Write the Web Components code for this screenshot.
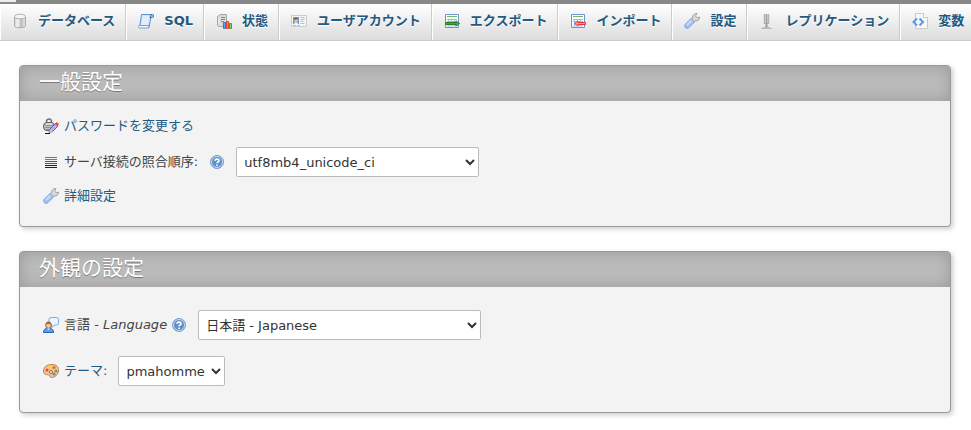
<!DOCTYPE html>
<html lang="ja">

<head>
    <meta charset="utf-8">
    <title>phpMyAdmin</title>
    <style>
        body {
            margin: 0;
            background: #fff;
            color: #444;
            font: 13px/20px "DejaVu Sans", "Noto Sans CJK JP", sans-serif;
        }
    </style>
</head>

<body>
    <pma-page>
        <top-menu slot="menu">
            <menu-tab icon="database">データベース</menu-tab>
            <menu-tab icon="sql">SQL</menu-tab>
            <menu-tab icon="status">状態</menu-tab>
            <menu-tab icon="account">ユーザアカウント</menu-tab>
            <menu-tab icon="export">エクスポート</menu-tab>
            <menu-tab icon="import">インポート</menu-tab>
            <menu-tab icon="wrench">設定</menu-tab>
            <menu-tab icon="replication">レプリケーション</menu-tab>
            <menu-tab icon="variables">変数</menu-tab>
        </top-menu>

        <settings-panel>
            <span slot="title">一般設定</span>
            <action-link icon="password">パスワードを変更する</action-link>
            <select-row icon="lines" help size="wide">
                <span slot="label">サーバ接続の照合順序:</span>
                <option>utf8mb4_unicode_ci</option>
            </select-row>
            <action-link icon="wrench">詳細設定</action-link>
        </settings-panel>

        <settings-panel roomy>
            <span slot="title">外観の設定</span>
            <select-row icon="language" help size="wider">
                <span slot="label">言語 - <i>Language</i></span>
                <option>日本語 - Japanese</option>
            </select-row>
            <select-row icon="theme" size="small">
                <span slot="label">テーマ:</span>
                <option>pmahomme</option>
            </select-row>
        </settings-panel>
    </pma-page>

    <script>
        const icons = {
            database: `
                <path d="M2.500 3.500v9c0 3 11 3 11 0v-9" fill="#ddd" stroke="#aaa"/>
                <path d="M5 6v8M6 6v8" stroke="#f4f4f4"/><path d="M8 6h3v8H8z" fill="#c2c2c2"/>
                <ellipse cx="8" cy="3.500" rx="5.500" ry="2.300" fill="#f6f6f6" stroke="#b0b0b0"/>`,
            sql: `
                <path d="M3.500 1.500h10L11 14.500H1.500z" fill="#cfe4fb" stroke="#5d94d0"/>
                <path d="M5 3h6.500L9.500 12h-6z" fill="#e0eefe"/>
                <path d="M12 4.500h2.500c1.500 0 1.500-3 0-3H13z" fill="#a9cdf5" stroke="#356fae"/>
                <path d="M1.500 12.500h9.500l-.5 2.500h-9c-1.300 0-1.300-2.500 0-2.500z" fill="#f4f9ff" stroke="#6ea1da"/>`,
            status: `
                <path d="M1.500 3.500l3-2h6v10l-2 2h-5l-2-1z" fill="#d9d9d9" stroke="#a5a5a5"/>
                <path d="M5 4.500h4M5 6.500h4M5 8.500h3" stroke="#8a8a8a"/><path d="M3 4v8" stroke="#f2f2f2"/>
                <path d="M7.500 9.500h2v6h-2z" fill="#5ea8fb" stroke="#2a79d6"/>
                <path d="M10.500 8.500h2v7h-2z" fill="#ff8a70" stroke="#e2432c"/>
                <path d="M13.500 10.500h2v5h-2z" fill="#7bd56f" stroke="#37a039"/>`,
            account: `
                <path d="M.5 2.500h15v11H.5z" fill="#f5f5f5" stroke="#ccc"/>
                <path d="M2 4h6v7H2z" fill="#5b9ede"/><circle cx="5" cy="7.300" r="1.900" fill="#ffb87c"/>
                <path d="M3 7c0-3 4-3 4 0L6 6z" fill="#80502d"/><path d="M3 11c0-2.500 4-2.500 4 0" fill="#d9ecff"/>
                <path d="M9.500 4.500h4M9.500 6.500h4M9.500 8.500h3M9.500 10.500h4M2 12.500h3m1 0h3" stroke="#bdbdbd"/>`,
            export: `
                <path d="M1.500 1.500h13v13h-13z" fill="#fff" stroke="#6a93cf"/>
                <path d="M3 3.500h10" stroke="#75b56c"/>
                <path d="M3 6.500h10M3 8.500h10M3 13h10M4.500 6v7M7.500 6v7M10.500 6v7" stroke="#9dbce6"/>
                <path d="M1.500 9.500H12V8l3.500 2.500L12 13v-1.500H1.500z" fill="#4aa03f" stroke="#2b7c2b"/>`,
            import: `
                <path d="M1.500 1.500h13v13h-13z" fill="#fff" stroke="#6a93cf"/>
                <path d="M3 3.500h10" stroke="#75b56c"/>
                <path d="M3 6.500h10M3 8.500h10M3 13h10M4.500 6v7M7.500 6v7M10.500 6v7" stroke="#9dbce6"/>
                <path d="M15.500 9.500H8V8l-3.500 2.500L8 13v-1.500h7.500z" fill="#ffa09b" stroke="#e0383a"/>`,
            wrench: `
                <path d="M7.500 7l1-3C9 1.500 10.500.500 13 .5L11.500 3l1.700 1.800 2.300-.8c.3 2.800-2 4.500-4.300 4L9.500 9z" fill="#d8d8d8" stroke="#a0a0a0"/>
                <path d="M7 5.500L10.500 9l-5.500 5.500C2.500 17-1 13.500 1.500 11z" fill="#9fc1f4" stroke="#7fa3e0"/>
                <path d="M3 12L7.500 7.500" stroke="#c5dafb" stroke-width="2"/>`,
            replication: `
                <path d="M4.500 1v9M10.500 1v9" stroke="#e2e2e2"/>
                <path d="M5.500 1v10M9.500 1v10" stroke="#b5b5b5"/><path d="M7.500 1v12" stroke="#a0a0a0" stroke-width="2"/>
                <path d="M5 10.500h5M6 13.500h3" stroke="#a5a5a5"/>
                <path d="M2 15.500h11M4 14.500h7" stroke="#bbb"/>`,
            variables: `
                <path d="M3.500.500h8l4 4v11h-12z" fill="#f7f7f7" stroke="#c9c9c9"/>
                <path d="M11.500.500v4h4" fill="#fff" stroke="#c5c5c5"/>
                <path d="M5 5.500L1.500 9 5 12.500M7.500 5.500L11 9l-3.500 3.500" fill="none" stroke="#559ce9" stroke-width="2"/>`,
            password: `
                <path d="M3.500 6V4c0-4 5-4 5 0v2" fill="none" stroke="#73737e" stroke-width="1.500"/>
                <rect x=".5" y="4.500" width="11" height="8" rx="3.500" fill="#c4c4ce" stroke="#5c5c68"/>
                <path d="M2 7.500h8M2 9.500h8M3 11.500h6" stroke="#8e8e99"/><path d="M3 6h6" stroke="#eee"/>
                <path d="M6 14.500l1-3.500 5.500-5.500L15 8l-5.500 5.500z" fill="#b5affa" stroke="#5f53ad"/>
                <path d="M12 6l1.500-2L16 6l-1.500 2.500z" fill="#ec4c2c"/><path d="M6 14.500l1-3.500 2.500 2.500z" fill="#ecc372"/>
                <path d="M2 15.500h5" stroke="#111"/>`,
            lines: `
                <path d="M2 3.500h12M2 5.500h12" stroke="#777"/><path d="M2 7.500h12M2 9.500h12" stroke="#555"/>
                <path d="M2 11.500h12M2 13.500h12" stroke="#222"/>`,
            language: `
                <path d="M8 .5h5.500q2 0 2 2V6q0 2-2 2H12l-3.500 2.500L9 8H8Q6 8 6 6V2.500Q6 .5 8 .5z" fill="#eaf5ff" stroke="#7da9e2"/>
                <path d="M.5 15.500c-.5-6 10.500-6 10 0z" fill="#57a3ef" stroke="#2464b6"/>
                <circle cx="5.500" cy="8.500" r="2.800" fill="#f9c897" stroke="#9d633b"/>
                <path d="M2.500 8.500c-.5-5.500 6.500-5.500 6 0L7 7H4z" fill="#a5683c"/><path d="M4 11.500L5.500 13 7 11.500" fill="#fff"/>`,
            theme: `
                <path d="M9 1.500c5 0 7 3 6.500 6.500-.5 4-4 6.500-7 6.500-2 0-1-2-2.500-2.500C4 11.500.5 12 .5 8S4 1.500 9 1.500z" fill="#f3c491" stroke="#c07c4c"/>
                <circle cx="4" cy="7" r="1.500" fill="#e44a36"/><circle cx="7" cy="4" r="1.500" fill="#ffcf2e"/>
                <circle cx="11" cy="4.500" r="1.500" fill="#ed5b45"/><circle cx="13" cy="8" r="1.500" fill="#54b24e"/>
                <circle cx="11" cy="11" r="1.500" fill="#4b8edf"/><circle cx="8" cy="9" r="1.500" fill="#f6f0e8" stroke="#a7693f"/>`,
            help: `
                <circle cx="8" cy="8" r="6.500" fill="#5f8fc9" stroke="#7c9fcd"/>
                <circle cx="8" cy="8" r="5.500" fill="none" stroke="#c9dcf0"/>
                <path d="M6 6.800c0-2.300 4-2.300 4 0 0 1.200-2 1.200-2 2.500M8 10.500V12" fill="none" stroke="#fff" stroke-width="1.600"/>`
        };

        class PmaIcon extends HTMLElement {
            constructor() {
                super();
                this.attachShadow({ mode: 'open' });
            }

            connectedCallback() {
                this.shadowRoot.innerHTML = `
                    <style>
                        :host { display: block; flex: none; width: 16px; height: 16px; }
                        svg { display: block; }
                    </style>
                    <svg width="16" height="16" viewBox="0 0 16 16" aria-hidden="true">${icons[this.getAttribute('name')]}</svg>
                `;
            }
        }

        class PmaPage extends HTMLElement {
            constructor() {
                super();
                this.attachShadow({ mode: 'open' });
                this.shadowRoot.innerHTML = `
                    <style>
                        :host { display: block; }
                        main {
                            display: flex;
                            flex-direction: column;
                            gap: 24px;
                            padding: 24px 20px 16px 19px;
                        }
                    </style>
                    <slot name="menu"></slot>
                    <main><slot></slot></main>
                `;
            }
        }

        class TopMenu extends HTMLElement {
            constructor() {
                super();
                this.attachShadow({ mode: 'open' });
                this.shadowRoot.innerHTML = `
                    <style>
                        :host { display: block; overflow: hidden; }
                        .strip { height: 4px; background: #888; }
                        .strip div { width: 16px; height: 2px; background: #eee; }
                        nav {
                            display: flex;
                            border-bottom: 1px solid #ccc;
                            background: linear-gradient(#fff, #dcdcdc);
                        }
                    </style>
                    <div class="strip"><div></div></div>
                    <nav><slot></slot></nav>
                `;
            }
        }

        class MenuTab extends HTMLElement {
            constructor() {
                super();
                this.attachShadow({ mode: 'open' });
            }

            connectedCallback() {
                this.shadowRoot.innerHTML = `
                    <style>
                        :host {
                            display: block;
                            flex: none;
                            border-right: 1px solid #ccc;
                            border-left: 1px solid #fff;
                        }
                        a {
                            display: flex;
                            align-items: center;
                            gap: 10px;
                            height: 34px;
                            padding: 0 10px 2px 11px;
                            color: #235a81;
                            font-weight: bold;
                            text-decoration: none;
                            text-shadow: 0 1px 0 #fff;
                            white-space: nowrap;
                        }
                    </style>
                    <a href="#"><pma-icon name="${this.getAttribute('icon')}"></pma-icon><span><slot></slot></span></a>
                `;
            }
        }

        class SettingsPanel extends HTMLElement {
            constructor() {
                super();
                this.attachShadow({ mode: 'open' });
                this.shadowRoot.innerHTML = `
                    <style>
                        :host {
                            display: block;
                            border: 1px solid #999;
                            border-radius: 4px;
                            background: #f3f3f3;
                            box-shadow: 2px 2px 5px #ccc;
                            overflow: hidden;
                        }
                        :host([roomy]) { --row-gap: 16px; }
                        h2 {
                            margin: 0;
                            padding: 0 19px 3px;
                            background: #bbb;
                            box-shadow: inset 0 0 15px #999;
                            color: #fff;
                            font-size: 21px;
                            font-weight: normal;
                            line-height: 32px;
                            text-shadow: 0 1px 0 #777;
                        }
                        div { padding: 15px 23px 9px; }
                        :host([roomy]) div { padding: 23px 23px 10px; }
                    </style>
                    <h2><slot name="title"></slot></h2>
                    <div><slot></slot></div>
                `;
            }
        }

        class ActionLink extends HTMLElement {
            constructor() {
                super();
                this.attachShadow({ mode: 'open' });
            }

            connectedCallback() {
                this.shadowRoot.innerHTML = `
                    <style>
                        :host { display: flex; margin-bottom: 11px; }
                        a {
                            display: flex;
                            align-items: center;
                            gap: 5px;
                            color: #235a81;
                            text-decoration: none;
                        }
                    </style>
                    <a href="#"><pma-icon name="${this.getAttribute('icon')}"></pma-icon><span><slot></slot></span></a>
                `;
            }
        }

        class SelectRow extends HTMLElement {
            constructor() {
                super();
                this.attachShadow({ mode: 'open' });
            }

            connectedCallback() {
                const help = this.hasAttribute('help')
                    ? '<a href="#" aria-label="Documentation"><pma-icon name="help"></pma-icon></a>'
                    : '';
                this.shadowRoot.innerHTML = `
                    <style>
                        :host {
                            display: flex;
                            align-items: center;
                            margin-bottom: var(--row-gap, 9px);
                        }
                        label { margin-left: 5px; }
                        :host([size="small"]) label { color: #235a81; }
                        a { margin-left: 4px; }
                        :host([size="wide"]) a { margin-left: 11px; }
                        select {
                            height: 30px;
                            margin: 0 0 0 11px;
                            padding: 0 0 0 3px;
                            border: 1px solid #bbb;
                            border-radius: 2px;
                            background: #fff;
                            color: #333;
                            font: inherit;
                        }
                        :host([size="small"]) select { width: 107px; }
                        :host([size="wide"]) select { width: 243px; }
                        :host([size="wider"]) select { width: 283px; }
                    </style>
                    <pma-icon name="${this.getAttribute('icon')}"></pma-icon>
                    <label for="choice"><slot name="label"></slot></label>
                    ${help}
                    <select id="choice"></select>
                `;
                this.shadowRoot.querySelector('select').append(...this.querySelectorAll('option'));
            }
        }

        customElements.define('pma-icon', PmaIcon);
        customElements.define('pma-page', PmaPage);
        customElements.define('top-menu', TopMenu);
        customElements.define('menu-tab', MenuTab);
        customElements.define('settings-panel', SettingsPanel);
        customElements.define('action-link', ActionLink);
        customElements.define('select-row', SelectRow);
    </script>
</body>

</html>
